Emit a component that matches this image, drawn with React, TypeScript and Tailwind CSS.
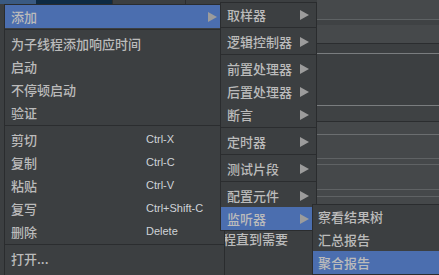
import React from "react";

type Item =
  | { kind: "item"; label: string; shortcut?: string; sub?: boolean; active?: boolean }
  | { kind: "sep" };

const mainItems: Item[] = [
  { kind: "item", label: "添加", sub: true, active: true },
  { kind: "sep" },
  { kind: "item", label: "为子线程添加响应时间" },
  { kind: "item", label: "启动" },
  { kind: "item", label: "不停顿启动" },
  { kind: "item", label: "验证" },
  { kind: "sep" },
  { kind: "item", label: "剪切", shortcut: "Ctrl-X" },
  { kind: "item", label: "复制", shortcut: "Ctrl-C" },
  { kind: "item", label: "粘贴", shortcut: "Ctrl-V" },
  { kind: "item", label: "复写", shortcut: "Ctrl+Shift-C" },
  { kind: "item", label: "删除", shortcut: "Delete" },
  { kind: "sep" },
  { kind: "item", label: "打开..." },
];

const addItems: Item[] = [
  { kind: "item", label: "取样器", sub: true },
  { kind: "sep" },
  { kind: "item", label: "逻辑控制器", sub: true },
  { kind: "sep" },
  { kind: "item", label: "前置处理器", sub: true },
  { kind: "item", label: "后置处理器", sub: true },
  { kind: "item", label: "断言", sub: true },
  { kind: "sep" },
  { kind: "item", label: "定时器", sub: true },
  { kind: "sep" },
  { kind: "item", label: "测试片段", sub: true },
  { kind: "sep" },
  { kind: "item", label: "配置元件", sub: true },
  { kind: "item", label: "监听器", sub: true, active: true },
];

const listenerItems: Item[] = [
  { kind: "item", label: "察看结果树" },
  { kind: "item", label: "汇总报告" },
  { kind: "item", label: "聚合报告", active: true },
];

// right-hand panel behind the popups: [height, colour]
const stripes: [number, string][] = [
  [15, "bg-[#46494b]"],
  [1, "bg-[#5e6264]"],
  [5, "bg-[#3f4244]"],
  [18, "bg-[#46494b]"],
  [1, "bg-[#2b2d2f]"],
  [9, "bg-[#3c3f41]"],
  [1, "bg-[#7a7d7f]"],
  [51, "bg-[#3c3f41]"],
  [1, "bg-[#7a7d7f]"],
  [15, "bg-[#3f4244]"],
  [1, "bg-[#2b2d2f]"],
  [12, "bg-[#45484a]"],
  [1, "bg-[#6b6e70]"],
  [23, "bg-[#45484a]"],
  [1, "bg-[#5f6264]"],
  [5, "bg-[#45484a]"],
  [1, "bg-[#5f6264]"],
  [24, "bg-[#45484a]"],
  [1, "bg-[#5f6264]"],
  [6, "bg-[#45484a]"],
  [1, "bg-[#5f6264]"],
];

function Arrow() {
  return (
    <svg width="9" height="10" viewBox="0 0 9 10" className="shrink-0">
      <polygon points="0,0 9,5 0,10" fill="#9c9c9c" />
    </svg>
  );
}

function MenuList({ items, labelWidth, pad }: { items: Item[]; labelWidth?: number; pad: string }) {
  return (
    <>
      {items.map((it, i) =>
        it.kind === "sep" ? (
          <div key={i} className="h-[4px] pt-[1px]">
            <div className="h-px bg-[#2b2d2f]" />
          </div>
        ) : (
          <div
            key={i}
            className={`flex h-[23px] items-center justify-between ${pad} pr-[7px] ${
              it.active ? "bg-[#4b6eaf]" : ""
            }`}
          >
            <div className="flex items-center">
              <span
                className="text-[13px] font-medium leading-none text-[#bbbbbb]"
                style={labelWidth ? { width: labelWidth } : undefined}
              >
                {it.label}
              </span>
              {it.shortcut && (
                <span className="font-['Liberation_Sans',Arial,sans-serif] text-[11px] leading-none text-[#cfd3d8]">
                  {it.shortcut}
                </span>
              )}
            </div>
            {it.sub && <Arrow />}
          </div>
        )
      )}
    </>
  );
}

export default function App() {
  return (
    <div className="relative h-[275px] w-[439px] overflow-hidden bg-[#3c3f41] font-['Noto_Sans_CJK_SC','Noto_Sans',sans-serif]">
      {/* window content behind the popup */}
      <div className="flex h-full flex-col">
        <div className="flex h-[4px]">
          <div className="w-[36px] bg-[#3a5a82]" />
          <div className="w-[76px] bg-[#0e2a42]" />
          <div className="w-px bg-[#2b2d2f]" />
          <div className="w-[72px] bg-[#3c3f41]" />
          <div className="w-px bg-[#2b2d2f]" />
          <div className="w-[131px] bg-[#3c3f41]" />
          <div className="flex-1 bg-[#46494b]" />
        </div>
        <div className="flex flex-1">
          <div className="w-[313px] pl-[210px] pt-[221px]">
            <span className="text-[13px] font-medium text-[#bbbbbb]">线程直到需要</span>
          </div>
          <div className="flex flex-1 flex-col">
            {stripes.map(([h, c], i) => (
              <div key={i} className={c} style={{ height: h }} />
            ))}
            <div className="flex-1 bg-[#45484a]" />
          </div>
        </div>
      </div>

      {/* popup menu */}
      <div className="absolute left-[4px] top-[4px] h-[290px] w-[221px] border border-[#2a2c2e] bg-[#3c3f41]">
        <MenuList items={mainItems} labelWidth={135} pad="pl-[6px]" />
      </div>

      {/* 添加 submenu */}
      <div className="absolute left-[220px] top-[2px] w-[97px] border border-[#2a2c2e] bg-[#3c3f41]">
        <MenuList items={addItems} pad="pl-[6px]" />
      </div>

      {/* 监听器 submenu */}
      <div className="absolute left-[312px] top-[204px] w-[140px] border border-[#2a2c2e] bg-[#3c3f41]">
        <MenuList items={listenerItems} pad="pl-[5px]" />
      </div>
    </div>
  );
}
